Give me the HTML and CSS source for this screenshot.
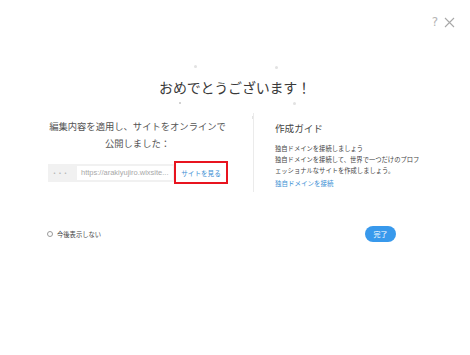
FILE: index.html
```html
<!DOCTYPE html>
<html lang="ja">
<head>
<meta charset="utf-8">
<link rel="stylesheet" href="styles.css">
</head>
<body>
<div class="dialog">
  <div class="top">
    <span class="help">?</span>
    <svg class="close" width="11" height="11" viewBox="0 0 11 11"><path d="M1 1L10 10M10 1L1 10" stroke="#a8a8a8" stroke-width="1.1" fill="none"/></svg>
  </div>
  <h1 class="title">おめでとうございます！</h1>
  <span class="spark s1"></span>
  <span class="spark s2"></span>
  <span class="spark s3"></span>
  <span class="spark s4"></span>
  <span class="spark s5"></span>
  <div class="cols">
    <div class="left">
      <p class="lead">編集内容を適用し、サイトをオンラインで<br>公開しました：</p>
      <div class="urlrow">
        <div class="urlbox">
          <span class="dots">•••</span>
          <span class="url">https://arakiyujiro.wixsite...</span>
        </div>
        <a class="view">サイトを見る</a>
      </div>
    </div>
    <div class="right">
      <h2 class="guide">作成ガイド</h2>
      <p class="body">独自ドメインを接続しましょう<br>独自ドメインを接続して、世界で一つだけのプロフ<br>ェッショナルなサイトを作成しましょう。</p>
      <a class="link">独自ドメインを接続</a>
    </div>
  </div>
  <div class="bottom">
    <label class="check"><span class="radio"></span>今後表示しない</label>
    <button class="done">完了</button>
  </div>
</div>
</body>
</html>
```
FILE: styles.css
```css
* { box-sizing: border-box; }
html, body { margin: 0; padding: 0; background: #fff; }
body { font-family: "Noto Sans CJK JP", "Noto Sans", sans-serif; color: #333; }
.dialog { position: relative; width: 470px; height: 355px; }
.top { display: flex; justify-content: flex-end; align-items: center; gap: 6px; height: 30px; padding: 14px 15px 0 0; }
.help { font-family: "DejaVu Sans", sans-serif; font-size: 12px; line-height: 11px; color: #b4b4b4; }
.close { display: block; }
.title { margin: 47px 0 0; font-size: 14px; line-height: 20px; font-weight: 400; text-align: center; color: #3a3a3a; letter-spacing: -0.2px; }
.spark { position: absolute; width: 3px; height: 3px; border-radius: 50%; background: #e2e2e2; }
.s1 { left: 194px; top: 65px; }
.s2 { left: 275px; top: 66px; }
.s3 { left: 179px; top: 102px; background: #c4c4c4; width: 2px; height: 2px; }
.s4 { left: 293px; top: 102px; }
.s5 { left: 252px; top: 116px; width: 1px; height: 3px; border-radius: 0; background: #e4e4e4; }
.cols { display: grid; grid-template-columns: 231px 1fr; margin: 16px 0 0 22px; height: 79px; }
.left { text-align: center; padding-top: 5px; }
.lead { margin: 0; font-size: 9.3px; line-height: 17px; color: #555; }
.urlrow { display: flex; justify-content: center; align-items: center; margin-top: 9px; margin-left: 1px; }
.urlbox { display: flex; align-items: center; height: 18px; width: 126px; background: #f1f1f1; padding: 2px 1px 2px 5px; }
.dots { font-family: "DejaVu Sans", sans-serif; font-size: 5px; color: #a8a8a8; width: 24px; letter-spacing: 2.5px; text-align: left; }
.url { flex: 1; height: 14px; background: #fff; font-family: "Liberation Sans", sans-serif; font-size: 7.5px; line-height: 14px; color: #a8a8a8; text-align: left; padding-left: 4px; white-space: nowrap; overflow: hidden; }
.view { display: flex; align-items: center; justify-content: center; width: 54px; height: 23px; border: 2px solid #e8141f; font-size: 6.6px; color: #3b8fd4; }
.right { border-left: 1px solid #ebebeb; padding: 8px 0 0 21px; }
.guide { margin: 0; font-size: 9.6px; line-height: 14px; font-weight: 400; color: #444; }
.body { margin: 8px 0 0; font-size: 6.3px; line-height: 11px; color: #444; }
.link { display: block; margin-top: 2px; font-size: 6.5px; line-height: 11px; color: #3b8fd4; }
.bottom { display: flex; justify-content: space-between; align-items: center; margin-top: 34px; padding: 0 74px 0 47px; height: 16px; }
.check { display: flex; align-items: center; gap: 4px; font-size: 6.3px; color: #444; }
.radio { width: 6px; height: 6px; border: 1px solid #9a9a9a; border-radius: 50%; }
.done { width: 31px; height: 16px; border: 0; border-radius: 8px; background: #3899ec; color: #fff; font-family: inherit; font-size: 7px; padding: 0; }
```
